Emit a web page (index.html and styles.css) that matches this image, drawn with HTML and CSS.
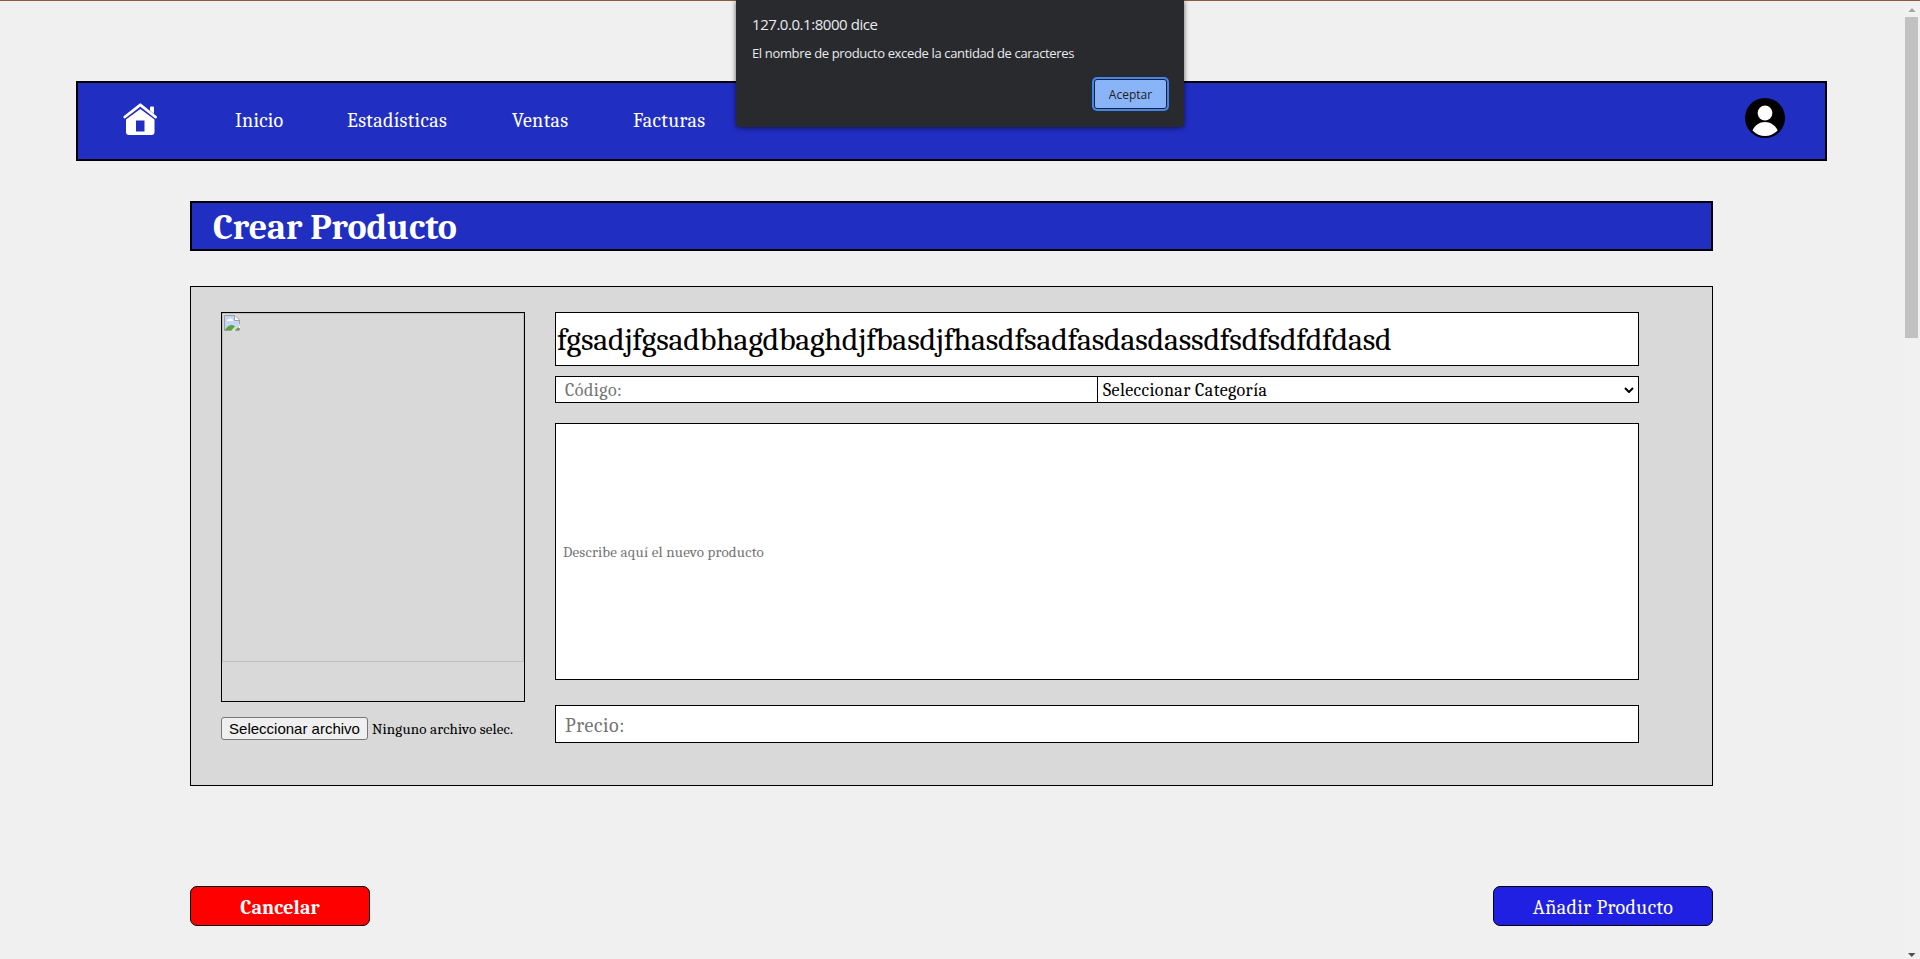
FILE: index.html
```html
<!DOCTYPE html>
<html lang="es">
<head>
<meta charset="utf-8">
<title>Crear Producto</title>
<link rel="stylesheet" href="styles.css">
</head>
<body>
<div class="viewport">
  <div class="page">
    <nav class="navbar">
      <a class="home" aria-label="Inicio">
        <svg width="35" height="32" viewBox="0 0 35 32"><path d="M1.800 14 17.300 1.800 32.500 14" fill="none" stroke="#fff" stroke-width="2.800" stroke-linecap="round" stroke-linejoin="round"/><path d="M27 4.500q0-1 1-1h2q1 0 1 1V11l-4-3.400z" fill="#fff"/><path fill-rule="evenodd" fill="#fff" d="M3 16.500 17.300 6 31.500 16.500V29q0 3-3 3H6q-3 0-3-3zM13 17.500v11h8.500v-11z"/></svg>
      </a>
      <a class="link inicio">Inicio</a>
      <a class="link estad">Estadísticas</a>
      <a class="link ventas">Ventas</a>
      <a class="link facturas">Facturas</a>
      <svg class="avatar" width="40" height="40" viewBox="0 0 40 40"><circle cx="20" cy="20" r="20"/><circle cx="20" cy="15" r="7.400" fill="#fff"/><path fill="#fff" d="M7.500 32.500C10 27 14.500 24 20 24s10 3 12.700 8.500Q27 38 20 38T7.500 32.500z"/></svg>
    </nav>
    <h1 class="title"><span>Crear Producto</span></h1>
    <form class="panel">
      <div class="media">
        <div class="frame">
          <div class="broken">
            <svg width="16" height="16" viewBox="0 0 16 16"><path fill="#fff" d="M0 0h11l5 5v11H0z"/><path fill="#c3d6f7" d="M1 1h10v5h4v9H1z"/><path fill="#fff" d="M3 6q0-2 2-2 1-1.500 2.500 0Q9 4 9 6z"/><path fill="#57a937" d="M1 15q3-5 7-5 2 0 3 1.500L8 15zM11 15l3-3 1 1v2z"/><path fill="none" stroke="#a0a0a0" d="M.5 16V.5H11l4.500 4.500V10M.5 15.500H8M11 15.500h4.500V13M10.500.5v5h5"/><path stroke="#d9d9d9" stroke-width="2" d="m8 16 8-6.500"/></svg>
          </div>
        </div>
        <div class="file"><button type="button" class="pick">Seleccionar archivo</button><span class="nofile">Ninguno archivo selec.</span></div>
      </div>
      <div class="fields">
        <input class="name" value="fgsadjfgsadbhagdbaghdjfbasdjfhasdfsadfasdasdassdfsdfsdfdfdasd">
        <div class="row">
          <input class="code" placeholder="Código:">
          <div class="category"><span>Seleccionar Categoría</span><svg width="10" height="6" viewBox="0 0 10 6"><path d="m1 1 4 4 4-4" fill="none" stroke="#000" stroke-width="2"/></svg></div>
        </div>
        <input class="desc" placeholder="Describe aquí el nuevo producto">
        <input class="price" placeholder="Precio:">
      </div>
    </form>
    <div class="actions">
      <button class="btn cancel"><span>Cancelar</span></button>
      <button class="btn add"><span>Añadir Producto</span></button>
    </div>
  </div>
  <div class="scrollbar">
    <svg width="15" height="16" viewBox="0 0 15 16"><path fill="#a3a3a3" d="M3.500 11h7L7 7z"/></svg>
    <div class="thumb"></div>
    <svg class="down" width="15" height="17" viewBox="0 0 15 17"><path fill="#505050" d="M3 11h7.500L6.750 15z"/></svg>
  </div>
</div>
<div class="dialog" role="alertdialog">
  <div class="origin">127.0.0.1:8000 dice</div>
  <div class="message">El nombre de producto excede la cantidad de caracteres</div>
  <button class="accept">Aceptar</button>
</div>
</body>
</html>
```
FILE: styles.css
```css
* { box-sizing: border-box; }
body {
  margin: 0;
  background: #f0f0f0;
  font-family: Cambria, Caladea, "Liberation Serif", serif;
  overflow: hidden;
}
button, input { font-family: inherit; margin: 0; }
.viewport {
  display: flex;
  height: 959px;
  border-top: 1px solid #8f5a3c;
}
.page { width: 1905px; padding: 80px 0 0 76px; }
.navbar {
  display: flex;
  align-items: center;
  width: 1751px;
  height: 80px;
  padding: 0 40px 0 45px;
  background: #202ec2;
  border: 2px solid #000;
}
.home { width: 35px; height: 32px; margin: 0 77px 4px 0; }
.home svg { display: block; }
.link {
  color: #fff;
  font-size: 20px;
  line-height: 24px;
  letter-spacing: 0.35px;
  white-space: nowrap;
}
.inicio { width: 112px; letter-spacing: 0.2px; }
.estad { width: 165px; }
.ventas { width: 121px; }
.avatar { margin: 0 0 6px auto; }
.title {
  display: flex;
  align-items: center;
  width: 1523px;
  height: 50px;
  margin: 40px 0 0 114px;
  padding: 3px 0 0 21px;
  background: #202ec2;
  border: 2px solid #000;
  color: #fff;
  font-size: 36px;
  line-height: 40px;
}
.panel {
  display: flex;
  gap: 30px;
  width: 1523px;
  height: 500px;
  margin: 35px 0 0 114px;
  padding: 25px 0 0 30px;
  background: #d9d9d9;
  border: 1px solid #000;
}
.frame { width: 304px; height: 390px; border: 1px solid #000; }
.broken { height: 349px; padding: 1px; border: 1px solid #c0c0c0; }
.broken svg { display: block; }
.file { display: flex; align-items: center; gap: 4px; margin-top: 15px; }
.pick {
  width: 147px;
  height: 23px;
  padding: 0;
  background: #efefef;
  border: 1px solid #767676;
  border-radius: 3px;
  color: #000;
  font: 15px/21px "Liberation Sans", Arial, sans-serif;
  white-space: nowrap;
}
.nofile { font-size: 15px; letter-spacing: 0.15px; white-space: nowrap; }
.fields { width: 1084px; }
.fields input, .category {
  display: block;
  background: #fff;
  border: 1px solid #000;
  border-radius: 0;
  outline: 0;
}
.fields input::placeholder { color: #757575; }
.fields .name { width: 100%; height: 54px; padding: 2px 1px 1px; font-size: 32px; letter-spacing: -0.24px; }
.row { display: flex; height: 27px; margin-top: 10px; }
.fields .code { width: 542px; border-right: 0; padding: 2px 8px 0 9px; font-size: 18px; letter-spacing: 0.5px; }
.row .category {
  display: flex;
  flex: 1;
  align-items: center;
  justify-content: space-between;
  padding: 0 4px 0 5px;
  font-size: 18px;
  letter-spacing: 0.4px;
}
.category span { padding-top: 1px; }
.desc { width: 100%; height: 257px; margin-top: 20px; padding: 0 7px; font-size: 15px; letter-spacing: 0.18px; }
.price { width: 100%; height: 38px; margin-top: 25px; padding: 3px 9px 0; font-size: 20px; letter-spacing: 0.6px; }
.actions {
  display: flex;
  justify-content: space-between;
  width: 1523px;
  margin: 100px 0 0 114px;
}
.btn {
  height: 40px;
  padding: 2px 0 0;
  border: 1px solid #000;
  border-radius: 7px;
  color: #fff;
  font-size: 20px;
}
.cancel { width: 180px; background: #f00; font-weight: bold; letter-spacing: 0.1px; }
.add { width: 220px; background: #2020e2; letter-spacing: 0.4px; }
.scrollbar { display: flex; flex-direction: column; width: 15px; background: #f1f1f1; }
.thumb { width: 13px; height: 321px; background: #c1c1c1; }
.down { margin-top: auto; }
.dialog {
  position: absolute;
  left: 736px;
  top: 0;
  width: 448px;
  height: 127px;
  padding: 14px 16px 0;
  display: flex;
  flex-direction: column;
  background: #292a2d;
  border-radius: 0 0 4px 4px;
  box-shadow: 0 1px 5px rgba(0, 0, 0, 0.6);
  color: #e8eaed;
  font-family: "Segoe UI", "Open Sans", sans-serif;
}
.origin { font-size: 15px; line-height: 20px; letter-spacing: -0.45px; }
.message { margin-top: 10px; font-size: 13px; line-height: 18px; letter-spacing: -0.35px; white-space: nowrap; }
.accept {
  align-self: flex-end;
  width: 73px;
  height: 30px;
  margin: 17px 1px 0 0;
  padding: 0;
  background: #8ab4f8;
  border: 1px solid #202124;
  border-radius: 3px;
  box-shadow: 0 0 0 2px #4285f4;
  color: #202124;
  font-size: 12px;
}
```
